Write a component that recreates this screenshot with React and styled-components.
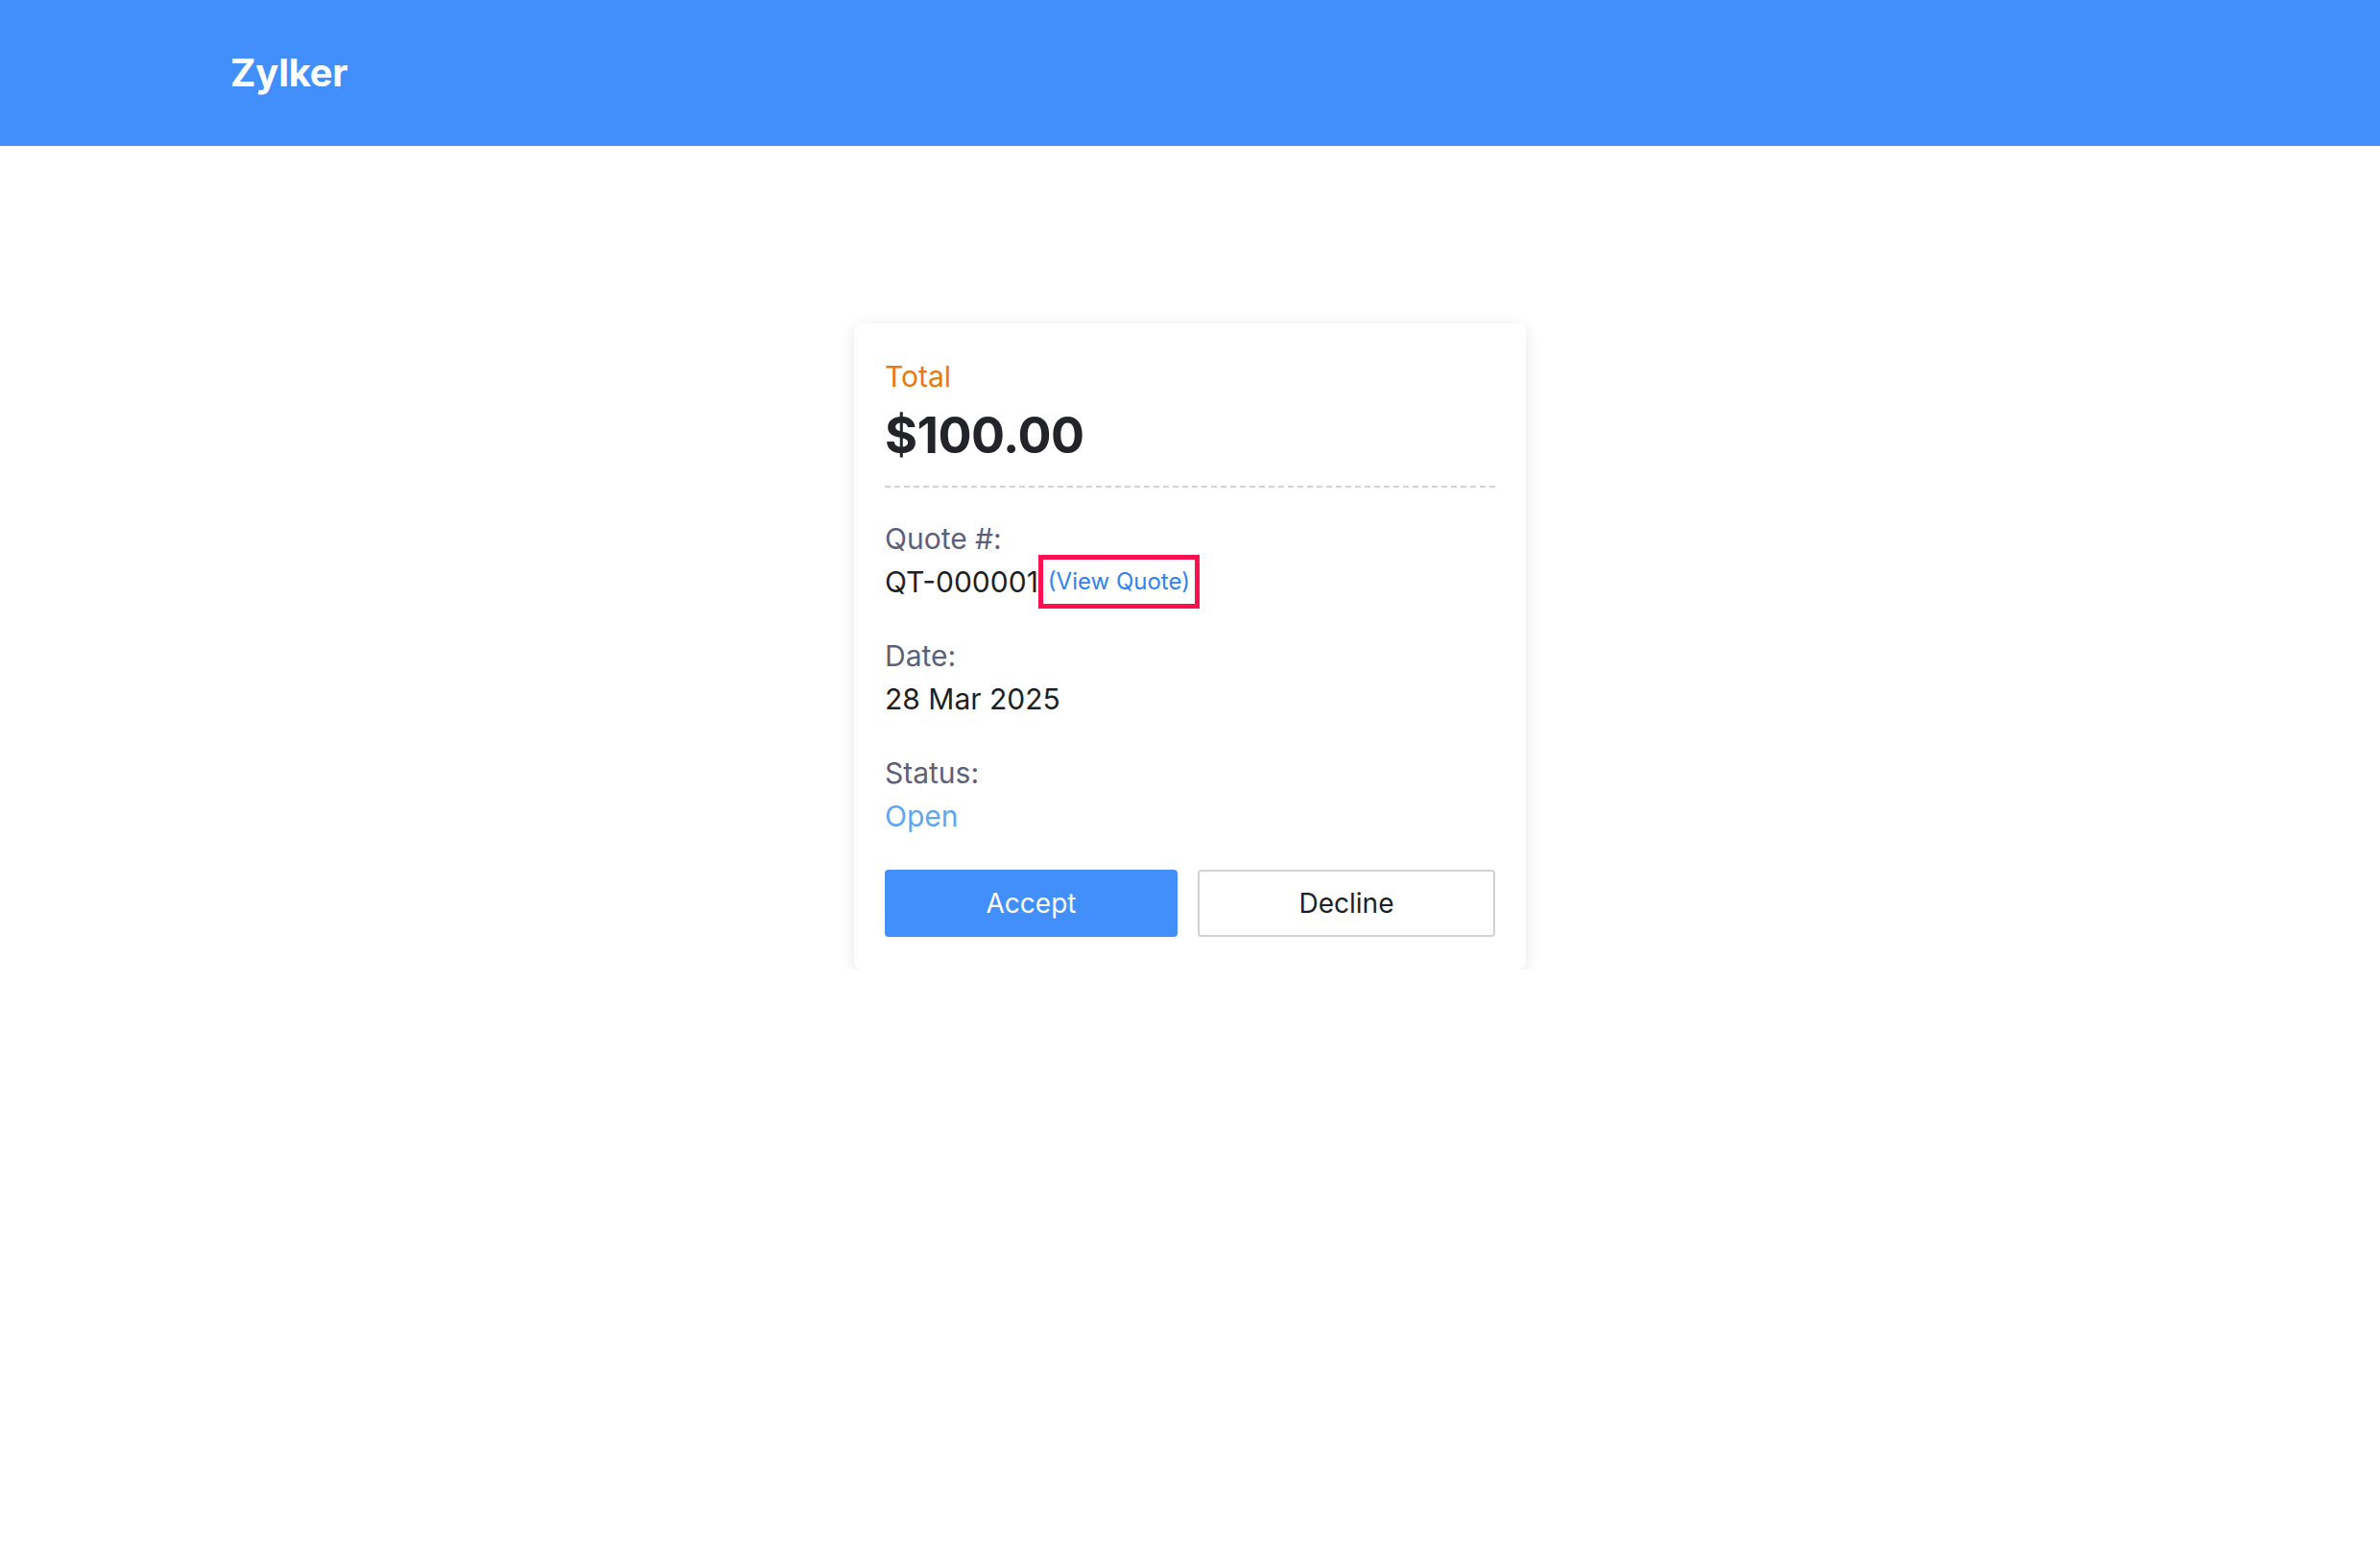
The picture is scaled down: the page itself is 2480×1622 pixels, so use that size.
import styled, { createGlobalStyle } from "styled-components";

const GlobalStyle = createGlobalStyle`
  html, body {
    margin: 0;
    padding: 0;
    background: #ffffff;
    font-family: Inter, "Noto Sans", "Liberation Sans", sans-serif;
  }
`;

const Header = styled.header`
  height: 152px;
  background-color: #428ffc;
  display: flex;
  align-items: center;
  padding-left: 240px;
  box-sizing: border-box;
`;

const Brand = styled.div`
  color: #ffffff;
  font-size: 40px;
  font-weight: 700;
  letter-spacing: -0.3px;
  margin-top: -2px;
`;

const Main = styled.main`
  display: flex;
  justify-content: center;
  padding-top: 185px;
`;

const Card = styled.section`
  width: 700px;
  box-sizing: border-box;
  padding: 38px 32px 34px;
  background: #ffffff;
  border-radius: 8px;
  box-shadow: 0 3px 16px rgba(0, 0, 0, 0.1);
`;

const TotalLabel = styled.div`
  color: #e47a14;
  font-size: 30px;
  line-height: 34px;
`;

const Amount = styled.div`
  margin-top: 14px;
  color: #222429;
  font-size: 52px;
  line-height: 62px;
  font-weight: 700;
  letter-spacing: -0.5px;
  padding-bottom: 21px;
  border-bottom: 2px dashed #d3d3d8;
`;

const Field = styled.div`
  margin-top: ${(p) => p.$gap}px;
`;

const Label = styled.div`
  color: #5c6078;
  font-size: 30px;
  line-height: 34px;
`;

const Value = styled.div`
  margin-top: 11px;
  display: flex;
  align-items: center;
  height: 34px;
  color: ${(p) => p.$color || "#1e1f24"};
  font-size: 30px;
  line-height: 34px;
`;

const ViewLink = styled.a`
  display: inline-flex;
  align-items: center;
  padding: 9px 5px 9px 5px;
  border: 5px solid #ff1050;
  color: #2f83f0;
  font-size: 24px;
  line-height: 28px;
  text-decoration: none;
  cursor: pointer;
`;

const Actions = styled.div`
  margin-top: 39px;
  display: grid;
  grid-template-columns: 305px 1fr;
  gap: 21px;
`;

const Button = styled.button`
  height: 70px;
  border-radius: 4px;
  font-family: inherit;
  font-size: 28px;
  cursor: pointer;
  border: ${(p) => (p.$primary ? "none" : "2px solid #d0d0d5")};
  background: ${(p) => (p.$primary ? "#428ffc" : "#ffffff")};
  color: ${(p) => (p.$primary ? "#ffffff" : "#1e1f24")};
`;

export default function App() {
  return (
    <>
      <GlobalStyle />
      <Header>
        <Brand>Zylker</Brand>
      </Header>
      <Main>
        <Card>
          <TotalLabel>Total</TotalLabel>
          <Amount>$100.00</Amount>
          <Field $gap={36}>
            <Label>Quote #:</Label>
            <Value>
              QT-000001
              <ViewLink>(View Quote)</ViewLink>
            </Value>
          </Field>
          <Field $gap={43}>
            <Label>Date:</Label>
            <Value>28 Mar 2025</Value>
          </Field>
          <Field $gap={43}>
            <Label>Status:</Label>
            <Value $color="#5ea6f0">Open</Value>
          </Field>
          <Actions>
            <Button $primary>Accept</Button>
            <Button>Decline</Button>
          </Actions>
        </Card>
      </Main>
    </>
  );
}
